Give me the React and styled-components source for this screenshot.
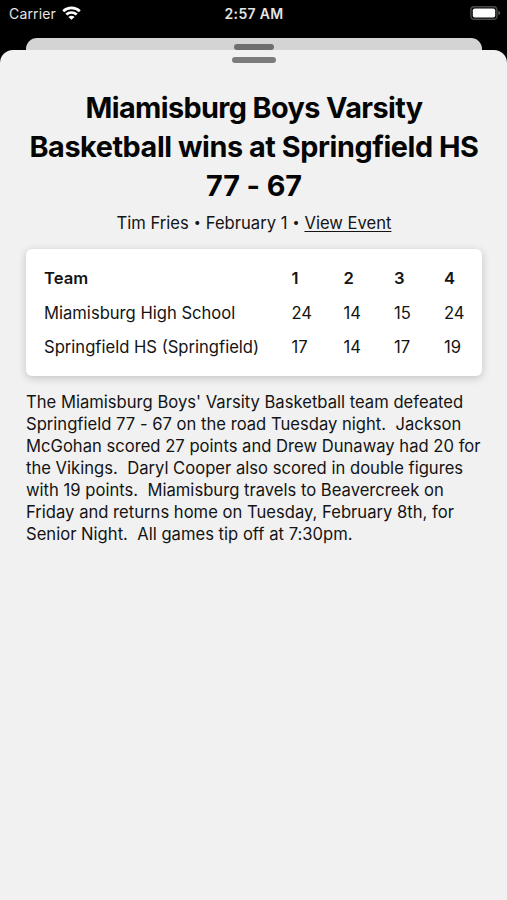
import React from 'react'
import styled, { createGlobalStyle } from 'styled-components'

const GlobalStyle = createGlobalStyle`
  * {
    box-sizing: border-box;
  }

  body {
    margin: 0;
    background: black;
    color: #141414;
    font-family: Inter, 'Liberation Sans', sans-serif;
  }
`

const Screen = styled.div`
  display: flex;
  flex-direction: column;
  width: 100%;
  height: 100vh;
  overflow: hidden;
  background: black;
`

const StatusBar = styled.header`
  display: grid;
  grid-template-columns: 1fr auto 1fr;
  align-items: center;
  flex: none;
  height: 26px;
  margin-bottom: 12px;
  padding: 0 6px 0 9px;
  color: #e4e4e4;
  font-size: 14px;
`

const Carrier = styled.div`
  display: flex;
  align-items: center;
  gap: 6px;
  letter-spacing: 0.15px;
`

const Clock = styled.div`
  padding: 1px 2px 0 0;
  font-size: 14px;
  font-weight: 600;
  letter-spacing: 0.3px;
`

const Battery = styled.svg`
  justify-self: end;
  width: 31px;
  height: 14px;
`

const BackSheet = styled.div`
  display: flex;
  justify-content: center;
  flex: none;
  height: 12px;
  margin: 0 25px 0 26px;
  padding-top: 6px;
  border-radius: 11px 11px 0 0;
  background: #d4d4d4;
`

const Sheet = styled.main`
  display: flex;
  flex-direction: column;
  align-items: center;
  flex: 1;
  padding: 7px 25px 0 26px;
  border-radius: 13px 13px 0 0;
  background: #f1f1f1;
`

const Handle = styled.div`
  width: ${({ $width }) => $width}px;
  height: 6px;
  border-radius: 3px;
  background: ${({ $color }) => $color};
`

const Title = styled.h1`
  margin: 25px -10px 0;
  color: #050505;
  font-size: 28.8px;
  font-weight: 700;
  line-height: 39px;
  text-align: center;
  white-space: nowrap;
`

const TitleLine = styled.span`
  display: block;
  letter-spacing: ${({ $tracking }) => $tracking}px;
`

const Byline = styled.p`
  display: flex;
  height: 22px;
  margin: 7px 0 0;
  font-size: 16.6px;
  line-height: 22px;
  white-space: pre;
`

const Dot = styled.span`
  margin: 0 5px;
  font-size: 12.5px;
`

const EventLink = styled.a`
  text-decoration: underline;
  text-decoration-thickness: 1px;
  text-decoration-skip-ink: none;
  text-underline-offset: 2px;
`

const ScoreCard = styled.section`
  width: 100%;
  margin-top: 15px;
  padding: 12px 0 12px 18px;
  border-radius: 6px;
  background: white;
  box-shadow: 0 2px 8px rgba(0, 0, 0, 0.2);
`

const ScoreRow = styled.div`
  display: grid;
  grid-template-columns: 247.5px 52px 50.5px 50px 1fr;
  align-items: center;
  height: 34.4px;
  font-size: 16.6px;
  font-weight: ${({ $head }) => ($head ? 600 : 400)};
  white-space: nowrap;
`

const Story = styled.p`
  align-self: stretch;
  margin: 15px -10px 0 0;
  font-size: 16.6px;
  line-height: 22px;
  letter-spacing: 0.01px;
  white-space: pre-wrap;
`

const rows = [
  ['Team', '1', '2', '3', '4'],
  ['Miamisburg High School', '24', '14', '15', '24'],
  ['Springfield HS (Springfield)', '17', '14', '17', '19']
]

const title = [
  { text: 'Miamisburg Boys Varsity', tracking: -0.6 },
  { text: 'Basketball wins at Springfield HS', tracking: -0.43 },
  { text: '77 - 67', tracking: -0.1 }
]

const story = [
  "The Miamisburg Boys' Varsity Basketball team defeated",
  'Springfield 77 - 67 on the road Tuesday night.  Jackson',
  'McGohan scored 27 points and Drew Dunaway had 20 for',
  'the Vikings.  Daryl Cooper also scored in double figures',
  'with 19 points.  Miamisburg travels to Beavercreek on',
  'Friday and returns home on Tuesday, February 8th, for',
  'Senior Night.  All games tip off at 7:30pm.'
]

const WifiIcon = () => (
  <svg width="19" height="14" viewBox="0 0 19 14" fill="none" stroke="white" strokeWidth="2.7">
    <path d="M1.2 5.2C5.8 0.8 13.2 0.8 17.8 5.2" />
    <path d="M4.3 8.6C7.3 5.8 11.7 5.8 14.7 8.6" />
    <path d="M9.5 13.8L6.4 10.9C8.1 9.3 10.9 9.3 12.6 10.9Z" fill="white" stroke="none" />
  </svg>
)

const BatteryIcon = () => (
  <Battery viewBox="0 0 31 14">
    <rect x="0.9" y="0.7" width="26" height="12.6" rx="3.4" fill="none" stroke="#4b4b4b" strokeWidth="1.4" />
    <rect x="2.8" y="2.4" width="22.4" height="9.2" rx="1.8" fill="white" />
    <path d="M28.3 4.8C31 5.6 31 8.4 28.3 9.2Z" fill="#555" />
  </Battery>
)

const App = () => (
  <>
    <GlobalStyle />
    <Screen>
      <StatusBar>
        <Carrier>
          Carrier
          <WifiIcon />
        </Carrier>
        <Clock>2:57 AM</Clock>
        <BatteryIcon />
      </StatusBar>
      <BackSheet>
        <Handle $width={40} $color="#6e6e6e" />
      </BackSheet>
      <Sheet>
        <Handle $width={44} $color="#7c7c7c" />
        <Title>
          {title.map(({ text, tracking }) => (
            <TitleLine key={text} $tracking={tracking}>
              {text}
            </TitleLine>
          ))}
        </Title>
        <Byline>
          Tim Fries
          <Dot>•</Dot>
          February 1
          <Dot>•</Dot>
          <EventLink>View Event</EventLink>
        </Byline>
        <ScoreCard>
          {rows.map((row, i) => (
            <ScoreRow key={row[0]} $head={i === 0}>
              {row.map((cell, j) => (
                <span key={j}>{cell}</span>
              ))}
            </ScoreRow>
          ))}
        </ScoreCard>
        <Story>{story.join('\n')}</Story>
      </Sheet>
    </Screen>
  </>
)

export { App as default }
